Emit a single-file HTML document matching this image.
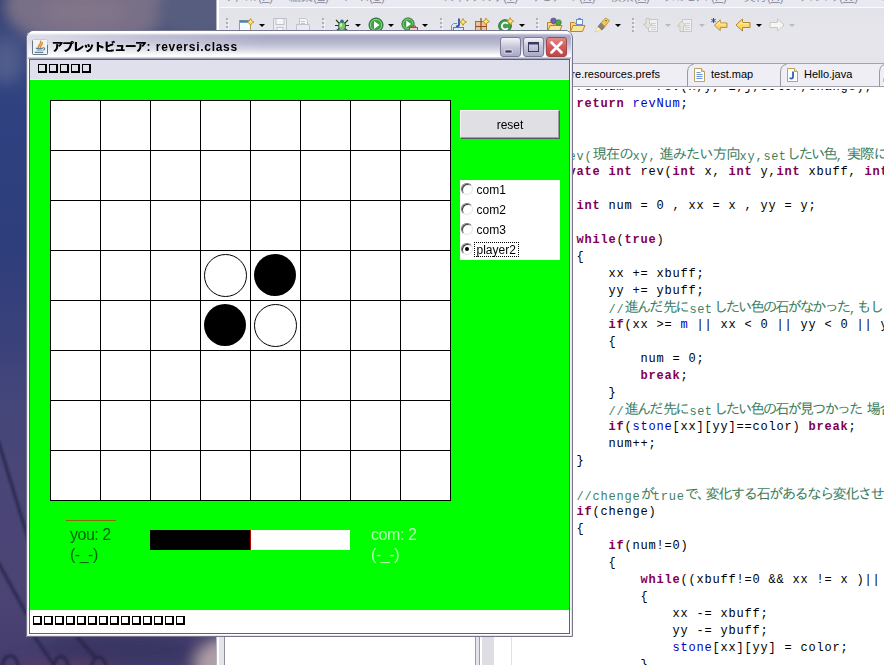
<!DOCTYPE html>
<html lang="ja">
<head>
<meta charset="utf-8">
<title>アプレットビューア: reversi.class</title>
<style>
*{box-sizing:border-box;margin:0;padding:0}
html,body{width:884px;height:665px;overflow:hidden}
body{position:relative;background:#3a4278;font-family:"Liberation Sans","Noto Sans CJK JP",sans-serif}
.abs{position:absolute}
/* ---------- wallpaper ---------- */
#wall{left:0;top:0;width:884px;height:665px}

/* ---------- eclipse details ---------- */
#ecl{left:214px;top:0;width:670px;height:665px;overflow:hidden}
#ebg{left:5px;top:0;width:665px;height:665px;background:#e4e4ea}
#efr{left:0;top:0;width:6px;height:665px;background:linear-gradient(90deg,transparent 0,transparent 1.6px,#b4b4c4 1.6px,#b4b4c4 2.6px,#fff 2.6px,#fff 5.3px,#e4e4ea 5.3px)}
#mbar{left:6px;top:0;width:664px;height:7px;background:#e9e9f1;overflow:hidden;font-size:12px;color:#9090a0}
#mbar span{position:absolute;top:-10px;line-height:14px;white-space:nowrap;transform-origin:0 0}
#mline{left:6px;top:7px;width:664px;height:1px;background:#fbfbfd}
#tool{left:6px;top:8px;width:664px;height:54px;background:linear-gradient(180deg,#e2e2e9 0,#e6e6ec 30px,#e4e4ea 54px)}
.ic{top:17px;width:16px;height:16px}
.grip{top:18px;width:3px;height:14px;background:repeating-linear-gradient(180deg,#b0b0bc 0,#b0b0bc 2px,transparent 2px,transparent 4px);border-right:1px solid rgba(255,255,255,.7)}
.dd{top:24px;width:0;height:0;border-left:3px solid transparent;border-right:3px solid transparent;border-top:3px solid #000}
.dd.dis{border-top-color:#b8b8c0}
#tabs{left:358px;top:63px;width:312px;height:24px;background:#eeeef4;border-top:1px solid #a3a3ae;border-bottom:1px solid #a3a3ae;font-size:11px;color:#000}
#tabs span{position:absolute;top:3px;line-height:14px;white-space:nowrap}
#edit{left:266px;top:87px;width:404px;height:578px;background:#fff;overflow:hidden}
#lview{left:10px;top:637px;width:251px;height:28px;background:#fff;border-left:1px solid #8e8e9c}
#code{left:64.4px;top:-8px;font-family:"Liberation Mono","IPAGothic",monospace;font-size:12px;letter-spacing:.8px;line-height:17px;color:#000}
#code div{height:17px;white-space:pre}
#code .k{color:#7f0055;font-weight:bold}
#code .b{color:#0000c0}
#code .c{color:#3f7f5f}
#code .j{font-family:"IPAGothic","Noto Sans CJK JP",monospace;font-size:14.5px;letter-spacing:-2.17px;position:relative;top:-1px}
#code .j0{font-family:"IPAGothic","Noto Sans CJK JP",monospace;font-size:14.5px;letter-spacing:-1.1px;position:relative;top:-1px}
#code .cj{position:relative;top:-1px}
#code .s{letter-spacing:.4px;margin:0 1px 0 2px}

/* ---------- applet window ---------- */
#win{left:26px;top:30px;width:547px;height:607px}
#wbody{left:0;top:29px;width:547px;height:578px;background:#fff}
#wfr{left:0;top:0;width:547px;height:607px;border-radius:8px 8px 0 0;border:1px solid #74748c}
#wfr:before{content:"";position:absolute;left:0;top:0;right:0;bottom:0;border-radius:7px 7px 0 0;border:1px solid #e6e6f2;border-top-color:#fff}
#tbar{left:0;top:0;width:547px;height:29px;border-radius:9.5px 9.5px 0 0;
 background:
  linear-gradient(180deg,#6e6e88 0,#6e6e88 1px,#ffffff 1px,#ffffff 3px,#b4b4cc 5px,#a9a9c6 7px,#b7b7cf 13px,#d3d3e2 19px,#f4f4f8 24px,#ffffff 25px,#ffffff 27px,#d0d0dc 27px,#d0d0dc 28px,#a6a6bc 28px)}
#tleft{left:1px;top:3px;width:240px;height:24px;background:#fbfbfd;-webkit-mask-image:linear-gradient(90deg,rgba(0,0,0,.65) 0,rgba(0,0,0,.5) 50px,rgba(0,0,0,.25) 130px,transparent 240px);mask-image:linear-gradient(90deg,rgba(0,0,0,.65) 0,rgba(0,0,0,.5) 50px,rgba(0,0,0,.25) 130px,transparent 240px)}
#ttl{left:25.5px;top:9px;height:16px;line-height:16px;font-size:12px;font-weight:bold;color:#000;white-space:nowrap}
#ttl .k{font-size:11.5px;letter-spacing:-1.05px;text-shadow:.5px 0 0 #000}
#ttl .l{letter-spacing:.72px}
.cb{top:6.5px;width:21px;height:20.5px;border-radius:3px;border:1px solid #7b7b98;background:linear-gradient(180deg,#f4f4fa 0,#c9c9dc 45%,#a9a9c6 100%)}
#bcl{border-color:#a04848;background:linear-gradient(180deg,#e58a8a 0,#d65c5c 45%,#c34545 100%)}
#client{left:3px;top:29px;width:541px;height:575px;background:#e0e0ec;border:1px solid #606078}
#menu{left:0;top:0;width:539px;height:20px;background:#dfe0ec;border-bottom:1px solid #e2f6e6}
#green{left:0;top:20px;width:539px;height:530px;background:#00ff00}
#stat{left:0;top:550px;width:539px;height:23px;background:#fff}
.tofu{display:block;font-size:11px;line-height:11px;white-space:nowrap;color:transparent;letter-spacing:0}
.tofu i{display:inline-block;width:9px;height:9px;margin-right:2px;border:1px solid #000;border-right-width:2px;border-bottom-width:2px;font-style:normal;overflow:hidden;vertical-align:top;color:transparent;font-size:8px;line-height:6px}


/* ---------- board ---------- */
#board{left:20px;top:20px;width:401px;height:401px;background-color:#fff;
 background-image:linear-gradient(90deg,#000 0,#000 1px,transparent 1px),linear-gradient(180deg,#000 0,#000 1px,transparent 1px);
 background-size:50px 50px}
.st{width:43px;height:43px;border-radius:50%}
.wh{border:1px solid #000;background:#fff}
.bk{background:#000;width:42px;height:42px}
#reset{left:430px;top:30px;width:99px;height:28px;background:#e0dfe3;border:1px solid;border-color:#fff #9c9ca4 #9c9ca4 #fff;
 font-size:12px;line-height:28px;text-align:center;color:#000;box-shadow:1px 1px 0 #5a5a62;text-indent:1px}
#rg{left:430px;top:100px;width:100px;height:80px;background:#fff;font-size:12px;color:#000}
#rg div{position:absolute;left:0;width:100px;height:20px;line-height:20px}
#rg span.r{position:absolute;left:1px;top:3px;width:11.5px;height:11.5px;border-radius:50%;border:1px solid;border-color:#7a7a80 #e8e8e8 #e8e8e8 #7a7a80;background:#fff;
 box-shadow:inset 1px 1px 0 #404048}
#rg span.t{position:absolute;left:16.5px;top:0}
#rg span.f{position:absolute;left:14px;top:2px;width:45px;height:15px;border:1px dotted #000}
#rg span.d{position:absolute;left:5px;top:7px;width:4px;height:4px;border-radius:50%;background:#000}
.sc{font-size:16px;line-height:20px;white-space:nowrap}
</style>
</head>
<body>
<svg id="wall" class="abs" width="884" height="665" viewBox="0 0 884 665">
 <defs>
  <linearGradient id="wg" x1="0" y1="0" x2="0" y2="1">
   <stop offset="0" stop-color="#323f70"/><stop offset=".06" stop-color="#3e4c80"/><stop offset=".16" stop-color="#2f4180"/><stop offset=".38" stop-color="#2e3e7c"/>
   <stop offset=".50" stop-color="#39417a"/><stop offset=".60" stop-color="#44467a"/><stop offset=".70" stop-color="#4a4678"/><stop offset=".88" stop-color="#4b4475"/><stop offset="1" stop-color="#443d6d"/>
  </linearGradient>
  <filter id="b8" x="-50%" y="-50%" width="200%" height="200%"><feGaussianBlur stdDeviation="7"/></filter>
  <filter id="b3" x="-50%" y="-50%" width="200%" height="200%"><feGaussianBlur stdDeviation="3"/></filter>
  <filter id="b1" x="-50%" y="-50%" width="200%" height="200%"><feGaussianBlur stdDeviation="1.2"/></filter>
 </defs>
 <rect width="884" height="665" fill="url(#wg)"/>
 <g filter="url(#b8)">
  <ellipse cx="88" cy="6" rx="84" ry="42" fill="#787087"/>
  <ellipse cx="85" cy="12" rx="42" ry="14" fill="#82758a"/>
  <ellipse cx="196" cy="12" rx="40" ry="30" fill="#575d7f"/>
  <ellipse cx="6" cy="62" rx="16" ry="22" fill="#55628e" opacity=".8"/>
  <ellipse cx="224" cy="670" rx="30" ry="32" fill="#b09fa6"/>
  <ellipse cx="120" cy="650" rx="80" ry="14" fill="#383562" opacity=".9"/>
  <ellipse cx="60" cy="668" rx="60" ry="8" fill="#5a3c68" opacity=".8"/>
 </g>
 <g filter="url(#b1)" fill="none" stroke="#28264a" stroke-width="2.800" opacity=".9">
  <path d="M-2 440L30 545M-2 562L27 615M34 636L54 665M76 636L96 658"/>
  <path d="M2 667c2-16 16-14 16 0M54 667c0-14 14-14 14 0M92 667c0-14 14-12 14 0"/>
 </g>
</svg>
<div id="ecl" class="abs">
 <div id="ebg" class="abs"></div>
 <div id="efr" class="abs"></div>
 <div id="mbar" class="abs">
  <span style="left:6px;transform:scaleX(0.667)">ファイル</span><span style="left:38px">(<u>F</u>)</span><span style="left:69px;transform:scaleX(1.000)">編集</span><span style="left:93px">(<u>E</u>)</span><span style="left:123px;transform:scaleX(0.722)">ソース</span><span style="left:149px">(<u>S</u>)</span><span style="left:222px;transform:scaleX(0.635)">リファクタリング</span><span style="left:283px">(<u>T</u>)</span><span style="left:313px;transform:scaleX(0.767)">ナビゲート</span><span style="left:359px">(<u>N</u>)</span><span style="left:390px;transform:scaleX(1.000)">検索</span><span style="left:414px">(<u>A</u>)</span><span style="left:444px;transform:scaleX(0.653)">プロジェクト</span><span style="left:491px">(<u>P</u>)</span><span style="left:524px;transform:scaleX(0.958)">実行</span><span style="left:547px">(<u>R</u>)</span><span style="left:579px;transform:scaleX(0.667)">ウィンドウ</span><span style="left:619px">(<u>W</u>)</span><span style="left:654px;transform:scaleX(0.722)">ヘルプ</span><span style="left:680px">(<u>H</u>)</span>
 </div>
 <div id="mline" class="abs"></div>
 <div id="tool" class="abs"></div>
 <div class="abs grip" style="left:12px"></div>
 <svg class="abs" style="left:25px;top:17px" width="16" height="16" viewBox="0 0 16 16"><rect x=".5" y="3.500" width="11" height="11" fill="#f4fbff" stroke="#b89a50"/><rect x="1" y="3.500" width="10" height="2.200" fill="#3f7fc8"/><path d="M11.5 1.5l1.2 2.3 2.3 1.2-2.3 1.2-1.2 2.3-1.2-2.3-2.3-1.2 2.3-1.2z" fill="#ffe680" stroke="#b8860b" stroke-width=".8"/></svg>
 <div class="abs dd" style="left:45px"></div>
 <svg class="abs" style="left:58px;top:17px" width="16" height="16" viewBox="0 0 16 16"><path d="M1.5 1.5h13v13h-13z" fill="#ebebef" stroke="#c2c2ca"/><rect x="4" y="1.5" width="8" height="6" fill="#f6f6f8" stroke="#c2c2ca"/><rect x="5" y="10.5" width="6" height="4" fill="#f6f6f8" stroke="#c2c2ca"/></svg>
 <svg class="abs" style="left:81px;top:17px" width="16" height="16" viewBox="0 0 16 16"><path d="M4.5 7.5v-6h6l2 2v4" fill="#f6f6f8" stroke="#c2c2ca"/><path d="M1.5 7.5h13v6h-13z" fill="#ebebef" stroke="#c2c2ca"/><path d="M6 4.500h4M6 6.500h4" stroke="#c2c2ca"/></svg>
 <div class="abs grip" style="left:108px"></div>
 <svg class="abs" style="left:120px;top:17px" width="16" height="16" viewBox="0 0 16 16"><path d="M2 3l4 4M14 3l-4 4M1 8.500h4M11 8.500h4M2 14l4-3M14 14l-4-3" stroke="#1c3c1c" stroke-width="1.1"/><ellipse cx="8" cy="9" rx="3.6" ry="4.6" fill="#7cc46c" stroke="#2f6f2f"/><circle cx="8" cy="4.200" r="1.8" fill="#3c6c8c"/><ellipse cx="7" cy="8" rx="1.2" ry="2" fill="#c8f0b8"/></svg>
 <div class="abs dd" style="left:141px"></div>
 <svg class="abs" style="left:154px;top:17px" width="16" height="16" viewBox="0 0 16 16"><circle cx="8" cy="8" r="7" fill="#3fa03f" stroke="#1f6f2f"/><circle cx="8" cy="8" r="5.600" fill="none" stroke="#8fd48f" stroke-width="1"/><path d="M6 4l5.500 4-5.500 4z" fill="#fff"/></svg>
 <div class="abs dd" style="left:174px"></div>
 <svg class="abs" style="left:187px;top:17px" width="17" height="16" viewBox="0 0 17 16"><g transform="scale(.88)"><circle cx="8" cy="8" r="7" fill="#3fa03f" stroke="#1f6f2f"/><circle cx="8" cy="8" r="5.600" fill="none" stroke="#8fd48f" stroke-width="1"/><path d="M6 4l5.500 4-5.500 4z" fill="#fff"/></g><rect x="8.5" y="10.5" width="8" height="5" fill="#f7c8c0" stroke="#c83c2c"/><path d="M10.500 10.500v-1.500h4v1.500" fill="none" stroke="#c83c2c"/></svg>
 <div class="abs dd" style="left:208px"></div>
 <div class="abs grip" style="left:226px"></div>
 <svg class="abs" style="left:237px;top:17px" width="16" height="16" viewBox="0 0 16 16"><path d="M.5 14.500v-6l2-2h3.500" fill="none" stroke="#6f8fc8"/><rect x="2.500" y="10.500" width="10" height="4" fill="#dfeaff" stroke="#4f7fc8"/><path d="M8 1.500v6.500c0 1.500-2 1.500-2.500.5" fill="none" stroke="#2c4fa8" stroke-width="1.800"/><path d="M12 1.5l1.2 2.3 2.3 1.2-2.3 1.2-1.2 2.3-1.2-2.3-2.3-1.2 2.3-1.2z" fill="#ffe680" stroke="#b8860b" stroke-width=".8"/></svg>
 <svg class="abs" style="left:260px;top:17px" width="16" height="16" viewBox="0 0 16 16"><rect x="1.500" y="4.500" width="11" height="10" fill="#e8c49c" stroke="#a86c3c"/><path d="M7 1v14M1.500 9.500h11" stroke="#8c4c1c" stroke-width="1.200"/><path d="M12 1l1.2 2.3 2.3 1.2-2.3 1.2-1.2 2.3-1.2-2.3-2.3-1.2 2.3-1.2z" fill="#ffe680" stroke="#b8860b" stroke-width=".8"/></svg>
 <svg class="abs" style="left:284px;top:17px" width="16" height="16" viewBox="0 0 16 16"><circle cx="7" cy="9" r="6.300" fill="#3f9f4f" stroke="#1f6f2f"/><path d="M9.800 6.800a3.400 3.400 0 1 0 0 4.400" fill="none" stroke="#fff" stroke-width="1.800"/><path d="M12.2 0.7l1.2 2.3 2.3 1.2-2.3 1.2-1.2 2.3-1.2-2.3-2.3-1.2 2.3-1.2z" fill="#ffe680" stroke="#b8860b" stroke-width=".8"/></svg>
 <div class="abs dd" style="left:305px"></div>
 <div class="abs grip" style="left:322px"></div>
 <svg class="abs" style="left:333px;top:17px" width="17" height="16" viewBox="0 0 17 16"><path d="M.5 14.500v-9h4l1.500 1.500h6v2" fill="#f8d878" stroke="#b8862c"/><path d="M.500 14.500l2.500-6h12l-2.500 6z" fill="#fbe49c" stroke="#b8862c"/><circle cx="6.500" cy="3.800" r="2.800" fill="#7c5cb8" stroke="#4c3c88" stroke-width=".6"/><circle cx="11.500" cy="5.500" r="2.800" fill="#4fa84f" stroke="#2f6f2f" stroke-width=".6"/></svg>
 <svg class="abs" style="left:356px;top:17px" width="16" height="16" viewBox="0 0 16 16"><path d="M.5 14.500v-9h4l1.500 1.500h6v2" fill="#f8d878" stroke="#b8862c"/><path d="M.500 14.500l2.500-6h12l-2.500 6z" fill="#fbe49c" stroke="#b8862c"/><rect x="6.500" y="2.500" width="6" height="5" fill="#f4f8ff" stroke="#6f8fc8"/><rect x="8" y="1" width="3" height="2" fill="#6f8fc8"/></svg>
 <svg class="abs" style="left:380px;top:17px" width="17" height="16" viewBox="0 0 17 16"><path d="M1 15l3.500-5.500 3.500 3z" fill="#fff8c8" stroke="#e8c46c" stroke-width=".6"/><path d="M4 9.500l3-3.500 4 3.500-3 3.500z" fill="#8c8478" stroke="#5c544c" stroke-width=".6"/><path d="M7 6l4.500-5 4 2.500-4.500 6z" fill="#f4c860" stroke="#b8862c" stroke-width=".8"/><circle cx="12" cy="3.800" r=".8" fill="#7c5c1c"/></svg>
 <div class="abs dd" style="left:401px"></div>
 <div class="abs grip" style="left:418px"></div>
 <svg class="abs" style="left:429px;top:17px" width="16" height="16" viewBox="0 0 16 16"><rect x="5.500" y="2.500" width="9" height="12" fill="#f0f0f2" stroke="#c8c8cc"/><path d="M8 6.500h5M8 8.500h5M8 10.500h5M8 12.500h5" stroke="#d0d0d4"/><path d="M3 1.500h3.500v5.500h2.500l-4.250 5-4.250-5h2.500z" fill="#e4e4dc" stroke="#c0c0b8" stroke-width=".8"/></svg>
 <div class="abs dd dis" style="left:451px"></div>
 <svg class="abs" style="left:463px;top:17px" width="16" height="16" viewBox="0 0 16 16"><rect x="5.500" y="2.500" width="9" height="12" fill="#f0f0f2" stroke="#c8c8cc"/><path d="M8 6.500h5M8 8.500h5M8 10.500h5M8 12.500h5" stroke="#d0d0d4"/><path d="M3 14.500h3.500v-5.500h2.500l-4.250-5-4.250 5h2.500z" fill="#e4e4dc" stroke="#c0c0b8" stroke-width=".8"/></svg>
 <div class="abs dd dis" style="left:485px"></div>
 <svg class="abs" style="left:497px;top:17px" width="17" height="16" viewBox="0 0 17 16"><g transform="translate(2.500,1) scale(.9)"><path d="M1 8l6.500-6v3.500h7.500v5h-7.500v3.500z" fill="#fbd868" stroke="#b8862c" stroke-width="1"/><path d="M3.500 8l3.500-3.200v2h6.500" fill="none" stroke="#fff4b8" stroke-width="1"/></g><path d="M2.500 1v5M.300 2.200l4.400 2.600M4.700 2.200l-4.400 2.600" stroke="#2c4c9c" stroke-width="1"/></svg>
 <svg class="abs" style="left:521px;top:17px" width="16" height="16" viewBox="0 0 16 16"><path d="M1 8l6.500-6v3.500h7.500v5h-7.500v3.500z" fill="#fbd868" stroke="#b8862c" stroke-width="1"/><path d="M3.500 8l3.500-3.200v2h6.500" fill="none" stroke="#fff4b8" stroke-width="1"/></svg>
 <div class="abs dd" style="left:542px"></div>
 <svg class="abs" style="left:555px;top:17px" width="16" height="16" viewBox="0 0 16 16"><path d="M15 8l-6.500-6v3.500h-7.500v5h7.500v3.500z" fill="#f6f6f4" stroke="#c8c8c4" stroke-width="1"/></svg>
 <div class="abs dd dis" style="left:575px"></div>
 <div id="tabs" class="abs">
  <svg class="abs" style="left:0;top:0" width="312" height="23" viewBox="0 0 312 23">
   <path d="M115.5 23V8Q116 .5 121.5 .5" fill="none" stroke="#9a9aa6"/><path d="M208.5 23V8Q209 .5 214.5 .5" fill="none" stroke="#9a9aa6"/><path d="M307.5 23V8Q308 .5 313.5 .5" fill="none" stroke="#9a9aa6"/>
   <g transform="translate(122,4)"><path d="M.5 .5h7l3 3v10h-10z" fill="#fff" stroke="#b9a45e"/><path d="M7.500 .5v3h3" fill="#f3e7b0" stroke="#b9a45e"/><path d="M2.500 4.500h4M2.500 6.500h6M2.500 8.500h6M2.500 10.500h6" stroke="#6f95d6"/></g>
   <g transform="translate(215,4)"><path d="M.5 .5h7l3 3v10h-10z" fill="#fff" stroke="#b9a45e"/><path d="M7.500 .5v3h3" fill="#f3e7b0" stroke="#b9a45e"/><path d="M6 3.500v5.500c0 2-2.500 2-3.200.6" fill="none" stroke="#2f5fb4" stroke-width="1.800"/></g>
   <path d="M311 15l1-1v4h-1z" fill="#e8b84c"/>
  </svg>
  <span style="right:224px">org.eclipse.core.resources.prefs</span>
  <span style="left:139px">test.map</span>
  <span style="left:232px">Hello.java</span>
 </div>
 <div id="edit" class="abs"><div id="code" class="abs">
<div>    <span class="b">revNum</span> += rev(x,y, i,j,color,change);</div>
<div>    <span class="k">return</span> <span class="b">revNum</span>;</div>
<div>}</div>
<div> </div>
<div><span class="c cj">//rev(<span class="j0">現在の</span>xy,<span class="j0" style="margin-left:2.5px">進みたい方向</span>xy,<span class="s" style="margin:0">set</span><span class="j">したい色</span>,<span class="j0" style="margin-left:3px">実際に変化させるか</span>)</span></div>
<div><span class="k">private</span> <span class="k">int</span> rev(<span class="k">int</span> x, <span class="k">int</span> y,<span class="k">int</span> xbuff, <span class="k">int</span> ybuff, <span class="k">int</span> color, <span class="k">boolean</span> chenge)</div>
<div>{</div>
<div>    <span class="k">int</span> num = 0 , xx = x , yy = y;</div>
<div> </div>
<div>    <span class="k">while</span>(<span class="k">true</span>)</div>
<div>    {</div>
<div>        xx += xbuff;</div>
<div>        yy += ybuff;</div>
<div>        <span class="c cj">//<span class="j">進んだ</span><span class="j" style="margin-left:1.5px">先に</span><span class="s">set</span><span class="j">したい色の石がなかった</span>,<span class="j">もしくは盤の外に出た場合</span></span></div>
<div>        <span class="k">if</span>(xx &gt;= <span class="b">m</span> || xx &lt; 0 || yy &lt; 0 || yy &gt;= <span class="b">m</span>)</div>
<div>        {</div>
<div>            num = 0;</div>
<div>            <span class="k">break</span>;</div>
<div>        }</div>
<div>        <span class="c cj">//<span class="j">進んだ</span><span class="j" style="margin-left:1.5px">先に</span><span class="s">set</span><span class="j">したい色の石が見つかった</span><span class="j0" style="margin-left:5px">場合</span></span></div>
<div>        <span class="k">if</span>(<span class="b">stone</span>[xx][yy]==color) <span class="k">break</span>;</div>
<div>        num++;</div>
<div>    }</div>
<div> </div>
<div>    <span class="c cj">//chenge<span class="j">が</span>true<span class="j">で、</span><span class="j0" style="margin-left:-4px;letter-spacing:-1.8px">変化する石があるなら変化させる</span></span></div>
<div>    <span class="k">if</span>(chenge)</div>
<div>    {</div>
<div>        <span class="k">if</span>(num!=0)</div>
<div>        {</div>
<div>            <span class="k">while</span>((xbuff!=0 &amp;&amp; xx != x )|| (ybuff!=0 &amp;&amp; yy != y))</div>
<div>            {</div>
<div>                xx -= xbuff;</div>
<div>                yy -= ybuff;</div>
<div>                <span class="b">stone</span>[xx][yy] = color;</div>
<div>            }</div>
 </div><div class="abs" style="left:0;top:0;width:404px;height:2px;background:#fff"></div><div class="abs" style="left:2px;top:0;width:12px;height:578px;background:#dddde3"></div><div class="abs" style="left:31px;top:0;width:1px;height:578px;background:#e2e2e6"></div></div>
 <div id="lview" class="abs"></div>
 <div class="abs" style="left:261px;top:87px;width:5px;height:578px;background:linear-gradient(90deg,#9c9ca8 0,#9c9ca8 1px,#e4e4ec 1px,#e4e4ec 4px,#9c9ca8 4px)"></div>
</div>
<div id="win" class="abs">
 <div id="wbody" class="abs"></div>
 <div id="tbar" class="abs"></div>
 <div id="tleft" class="abs"></div>
 <svg class="abs" style="left:6px;top:8.500px" width="16" height="16" viewBox="0 0 16 16">
  <rect x=".5" y=".5" width="15" height="15" rx="1" fill="#f1f4f7" stroke="#c4ccd4"/>
  <path d="M.5 1.500V14.500Q.5 15.500 1.500 15.500H14.500Q15.500 15.500 15.500 14.500V6" fill="none" stroke="#667682"/>
  <path d="M6.300 8.300C5.600 6.200 9.800 4.800 8.600 2.200M8.300 8.200C8.200 6.600 11 5.600 10.200 3.600" fill="none" stroke="#e58a34" stroke-width="1.500" stroke-linecap="round"/>
  <path d="M3.800 9.300h7M4.800 11h5M2.800 13.300h8.400" fill="none" stroke="#5f7f98" stroke-width="1.200"/>
  <path d="M10.800 8.800c2.600-.6 2.600 2.400-.2 2.400" fill="none" stroke="#5f7f98" stroke-width="1.100"/>
 </svg>
 <div id="ttl" class="abs"><span class="k">アプレットビューア</span><span class="l" style="position:absolute;left:95px">:</span><span class="l" style="position:absolute;left:104.3px">reversi.class</span></div>
 <div id="bmin" class="abs cb" style="left:474px"><svg width="19" height="19"><rect x="4" y="12" width="7" height="3" fill="#3a3a5c" stroke="#fff" stroke-width=".6"/></svg></div>
 <div id="bmax" class="abs cb" style="left:497px"><svg width="19" height="19"><rect x="4.5" y="4.5" width="10" height="9" fill="none" stroke="#3a3a5c"/><rect x="4" y="4" width="11" height="2.5" fill="#3a3a5c"/></svg></div>
 <div id="bcl" class="abs cb" style="left:520px"><svg width="19" height="19"><path d="M4.500 4.500l10 10M14.500 4.500l-10 10" stroke="#fff" stroke-width="2.700" stroke-linecap="round"/></svg></div>
 <div id="client" class="abs">
  <div id="menu" class="abs"><span class="tofu abs" style="left:8px;top:4px"><i>□</i><i>□</i><i>□</i><i>□</i><i>□</i></span></div>
  <div id="green" class="abs">
   <div id="board" class="abs"></div>
   <div class="abs st wh" style="left:174px;top:174px"></div>
   <div class="abs st bk" style="left:224px;top:174px"></div>
   <div class="abs st bk" style="left:174px;top:224px"></div>
   <div class="abs st wh" style="left:224px;top:224px"></div>
   <div id="reset" class="abs">reset</div>
   <div id="rg" class="abs">
    <div style="top:0"><span class="r"></span><span class="t">com1</span></div>
    <div style="top:20px"><span class="r"></span><span class="t">com2</span></div>
    <div style="top:40px"><span class="r"></span><span class="t">com3</span></div>
    <div style="top:60px"><span class="r"></span><span class="d"></span><span class="f"></span><span class="t">player2</span></div>
   </div>
   <div class="abs" style="left:36px;top:440px;width:50px;height:1px;background:#8c6a08"></div>
   <div class="abs sc" style="left:40px;top:445px;color:#0a600a;letter-spacing:-.5px">you: 2<br>(-_-)</div>
   <div class="abs" style="left:120px;top:450px;width:100px;height:20px;background:#000"></div>
   <div class="abs" style="left:220px;top:450px;width:1px;height:20px;background:#c00000"></div>
   <div class="abs" style="left:221px;top:450px;width:99px;height:20px;background:#fff"></div>
   <div class="abs sc" style="left:341px;top:445px;color:#b8ffb8;letter-spacing:-.4px">com: 2<br>(-_-)</div>
  </div>
  <div id="stat" class="abs"><span class="tofu abs" style="left:3px;top:6px"><i>□</i><i>□</i><i>□</i><i>□</i><i>□</i><i>□</i><i>□</i><i>□</i><i>□</i><i>□</i><i>□</i><i>□</i><i>□</i><i>□</i></span></div>
 </div>
 <div id="wfr" class="abs"></div>
</div>
</body>
</html>
